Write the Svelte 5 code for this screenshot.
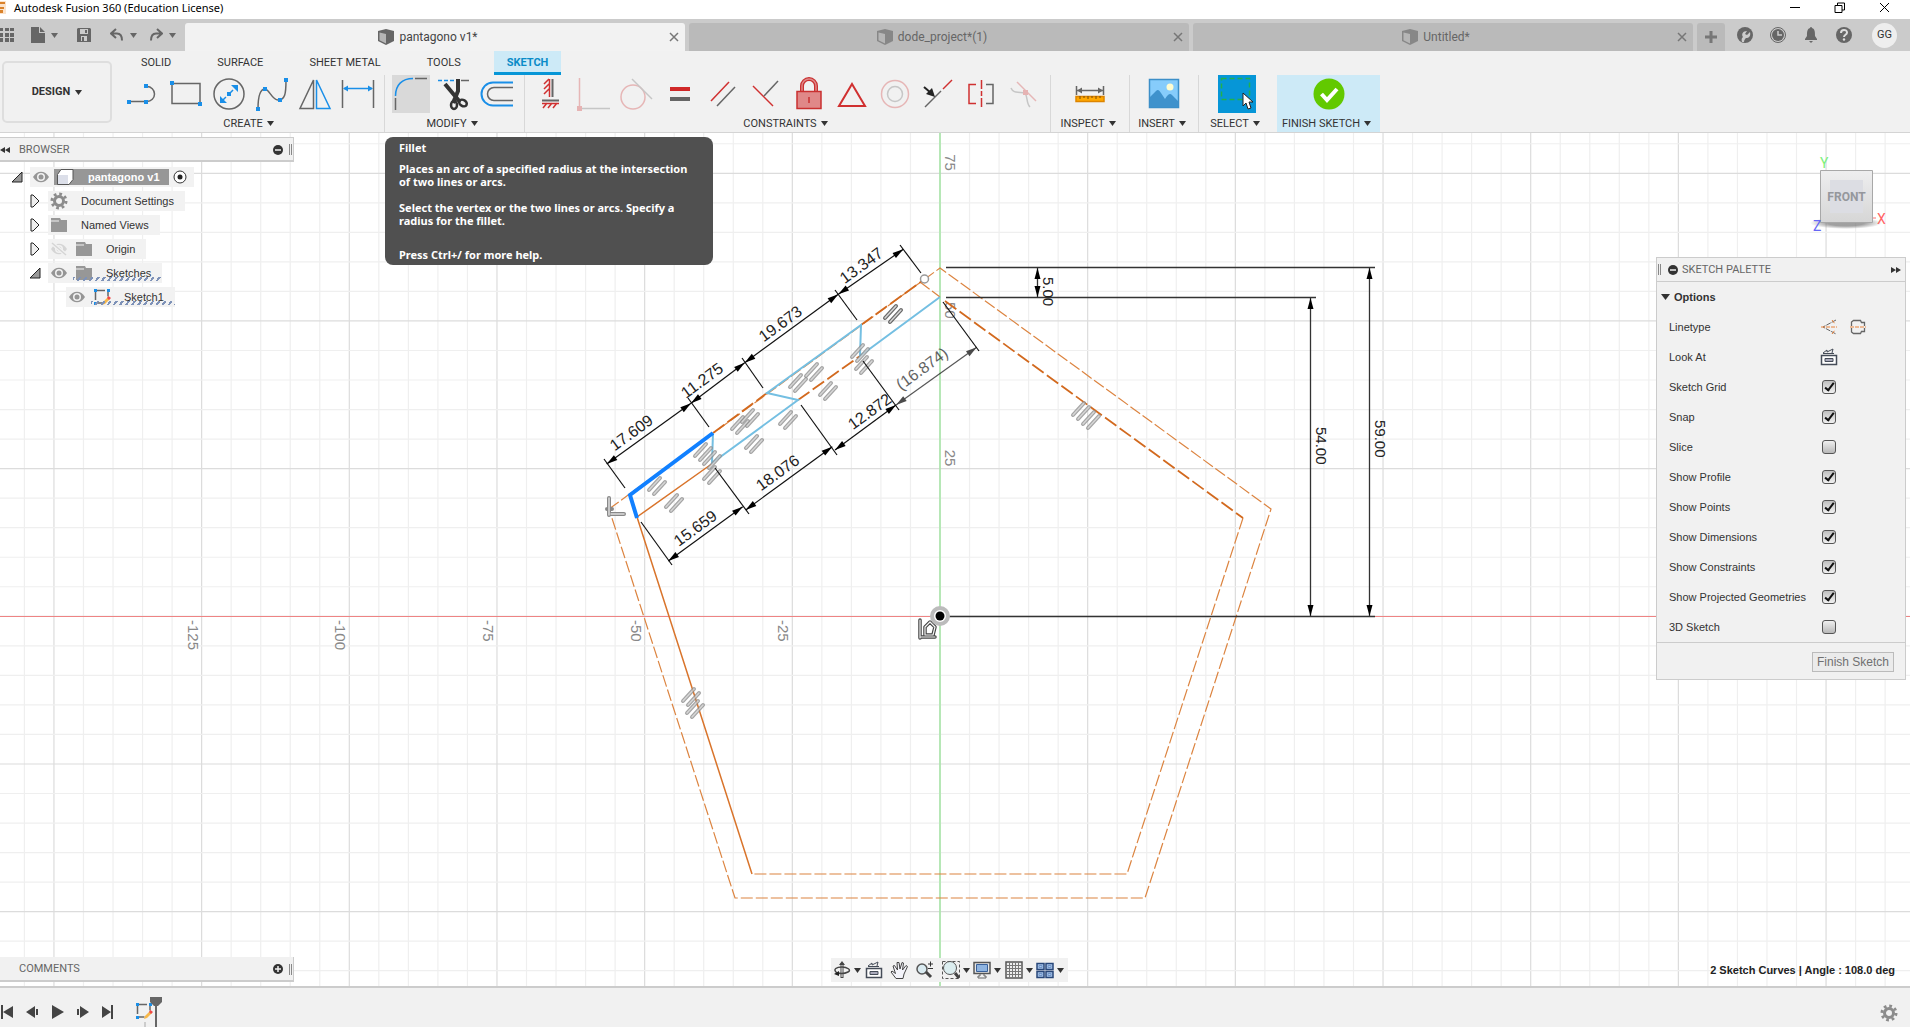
<script>
  const docs = [
    { name: 'pantagono v1*', active: true },
    { name: 'dode_project*(1)', active: false },
    { name: 'Untitled*', active: false }
  ];
  const modes = ['SOLID', 'SURFACE', 'SHEET METAL', 'TOOLS', 'SKETCH'];
  const groups = [
    { label: 'CREATE', icons: ['line', 'rect', 'circle', 'spline', 'mirror', 'dimension'] },
    { label: 'MODIFY', icons: ['fillet', 'trim', 'offset'] },
    {
      label: 'CONSTRAINTS',
      icons: ['horvert', 'coincident', 'tangent', 'equal', 'parallel', 'perpendicular', 'fix', 'polygon', 'concentric', 'midpoint', 'symmetry', 'curvature']
    },
    { label: 'INSPECT', icons: ['measure'] },
    { label: 'INSERT', icons: ['image'] },
    { label: 'SELECT', icons: ['select'] },
    { label: 'FINISH SKETCH', icons: ['finish'] }
  ];
  const tree = [
    { name: 'Document Settings', open: false, icons: ['gear'] },
    { name: 'Named Views', open: false, icons: ['folder'] },
    { name: 'Origin', open: false, icons: ['eyeoff', 'folder'] },
    { name: 'Sketches', open: true, icons: ['eye', 'folder'], hatch: true },
    { name: 'Sketch1', leaf: true, icons: ['eye', 'sketch'], hatch: true }
  ];
  const options = [
    { name: 'Sketch Grid', on: true },
    { name: 'Snap', on: true },
    { name: 'Slice', on: false },
    { name: 'Show Profile', on: true },
    { name: 'Show Points', on: true },
    { name: 'Show Dimensions', on: true },
    { name: 'Show Constraints', on: true },
    { name: 'Show Projected Geometries', on: true },
    { name: '3D Sketch', on: false }
  ];
  const navTools = [
    { icon: 'orbit', menu: true },
    { icon: 'lookat' },
    { icon: 'hand' },
    { icon: 'zoom' },
    { icon: 'zoomwin', menu: true },
    { icon: 'display', menu: true },
    { icon: 'gridset', menu: true },
    { icon: 'views', menu: true }
  ];
  const playback = [
    { name: 'Go to start', d: 'M1 1h2v14H1zM13 2v12L3 8z' },
    { name: 'Step back', d: 'M10 2v12L1 8zM11 5h2v6h-2z' },
    { name: 'Play', d: 'M2 1v14L14 8z' },
    { name: 'Step forward', d: 'M5 2v12l9-6zM2 5h2v6H2z' },
    { name: 'Go to end', d: 'M13 1h-2v14h2zM2 2v12L11 8z' }
  ];

  // Sketch space: origin of the axes and pixels for 5 units
  const ox = 940, oy = 616.3, step = 29.535;
  const cols = Array.from({ length: 66 }, (_, i) => i - 32);
  const rows = Array.from({ length: 30 }, (_, i) => i - 17);
  const xLabels = [-125, -100, -75, -50, -25];
  const yLabels = [75, 50, 25];

  const dims = [
    { t: '17.609', a: [606.7, 464], b: [691, 403.3], c: [631, 432.3] },
    { t: '11.275', a: [691, 403.3], b: [744.7, 362.7], c: [701.7, 380] },
    { t: '19.673', a: [744.7, 362.7], b: [838.3, 294.3], c: [780, 323.3] },
    { t: '13.347', a: [838.3, 294.3], b: [903.3, 249.3], c: [861, 265] },
    { t: '15.659', a: [668.3, 561], b: [742.7, 506.7], c: [695, 527.7] },
    { t: '18.076', a: [745.7, 510], b: [832.3, 446.7], c: [777.3, 472.3] },
    { t: '12.872', a: [835, 450], b: [896, 405], c: [869.3, 411] },
    { t: '(16.874)', a: [896, 405], b: [976.7, 347.3], c: [921.7, 368.3], soft: true }
  ];
  const ext = [
    [604, 459, 625, 488], [688, 398, 709, 427], [742, 358, 763, 388], [835, 290, 857, 320], [900, 245, 921, 273],
    [641, 522, 672, 565], [715, 468, 749, 514], [801, 405, 837, 455], [863, 361, 899, 410], [943, 302, 979, 351]
  ];
  const marks = [
    [657, 486], [674, 503], [703, 452], [712, 460], [712, 475], [740, 425], [750, 418], [754, 444], [788, 420],
    [798, 383], [814, 372], [828, 391], [860, 353], [864, 365], [893, 314], [1081, 411], [1091, 420], [691, 697], [695, 709]
  ];
</script>

{#snippet caret()}
  <svg class="caret" width="7" height="5" viewBox="0 0 7 5"><path d="M0 0h7L3.500 5z" fill="currentColor" /></svg>
{/snippet}

{#snippet cube(dim)}
  <svg class="cube" class:dim width="16" height="16" viewBox="0 0 16 16">
    <path d="M8 0l8 2v10l-8 4-8-4V2z" fill="#666" />
    <path d="M1.500 3.500L8 5v9.500l-6.500-3.300z" fill="#b5b5b5" />
  </svg>
{/snippet}

{#snippet tool(name)}
  <svg width="38" height="38" viewBox="0 0 38 38" fill="none" stroke="#666" stroke-width="1.500">
    {#if name === 'line'}
      <path d="M5 26.500h18a7.500 7.500 0 0 0 0-15" />
      <path d="M3 25h4v4H3zM20 25h4v4h-4zM20 9h4v4h-4z" class="bf" />
    {:else if name === 'rect'}
      <path d="M5 8.500h28v20H5z" /><path d="M3 6h4v4H3zM31 27h4v4h-4z" class="bf" />
    {:else if name === 'circle'}
      <circle cx="19" cy="19" r="15" /><path d="M11 27L27 11" class="bs" stroke-dasharray="7 3" />
      <path d="M28 10v7l-7-7zM10 28v-7l7 7zM17 17h4v4h-4z" class="bf" />
    {:else if name === 'spline'}
      <path d="M5 34c0-16 3-20 7-20s7 11 13 11c7 0 8-6 8-20" />
      <path d="M3 32h4v4H3zM10 12h4v4h-4zM25 23h4v4h-4zM31 3h4v4h-4z" class="bf" />
    {:else if name === 'mirror'}
      <path d="M17.500 5v28.500H4z" /><path d="M20.500 5v28.500H34z" class="bs" />
    {:else if name === 'dimension'}
      <path d="M3.500 5v28M34.500 5v28" /><path d="M5 13.500h28" class="bs" /><path d="M4 13.500l5-3v6zM34 13.500l-5-3v6z" class="bf" />
    {:else if name === 'fillet'}
      <path d="M3.500 35V23M23 3.500h12" /><path d="M3.500 21C3.500 10 10 3.500 21 3.500" class="bs" />
    {:else if name === 'trim'}
      <path d="M3 5.500h17" class="bs" stroke-dasharray="4 2" /><path d="M26 5.500h8" />
      <path d="M10 9l15 18M23 4v12l-5 12" stroke="#333" stroke-width="4" />
      <ellipse cx="19" cy="30" rx="3" ry="4" stroke="#333" stroke-width="2.500" /><ellipse cx="28" cy="28" rx="4" ry="3" stroke="#333" stroke-width="2.500" transform="rotate(30 28 28)" />
    {:else if name === 'offset'}
      <path d="M35 7.500H15a11.500 11.500 0 0 0 0 23h20" class="bs" stroke-width="2" /><path d="M35 12.500H16a6.500 6.500 0 0 0 0 13h19" />
    {:else if name === 'horvert'}
      <path d="M20.500 4v18M10 25.500h17" stroke-width="2" />
      <path d="M17.500 4v18M10 28.500h17M17 4l-5 5M17 9l-5 5M17 14l-5 5M15 28l-4 5M20 28l-4 5M25 28l-4 5" class="rs" />
    {:else if name === 'coincident'}
      <g class="faint"><path d="M4.500 3v30" class="rs" /><path d="M4 33.500h31" /><path d="M2 31h5v5H2z" class="rf" /></g>
    {:else if name === 'tangent'}
      <g class="faint"><circle cx="15" cy="22" r="12" class="rs" /><path d="M14 4l20 20" /></g>
    {:else if name === 'equal'}
      <path d="M9 12h20v4H9z" class="rf" /><path d="M9 22h20v4H9z" fill="#666" stroke="none" />
    {:else if name === 'parallel'}
      <path d="M7 26L25 7" class="rs" /><path d="M13 31L31 12" />
    {:else if name === 'perpendicular'}
      <path d="M6 11l20 20" class="rs" /><path d="M17 21L31 6" />
    {:else if name === 'fix'}
      <path d="M12 16V11a7 7 0 0 1 14 0v5" stroke="#c93030" stroke-width="4" /><path d="M12 16V11a7 7 0 0 1 14 0v5" stroke="#e08888" stroke-width="1.500" />
      <path d="M7 16.500h24v17H7z" fill="#e08888" stroke="#c93030" /><path d="M19 22v6" stroke="#c93030" />
    {:else if name === 'polygon'}
      <path d="M19 9L32 31H6z" class="rs" stroke-width="2" />
    {:else if name === 'concentric'}
      <g class="faint"><circle cx="19" cy="19" r="13.500" class="rs" /><circle cx="19" cy="19" r="7.500" /></g>
    {:else if name === 'midpoint'}
      <path d="M6 32L22 16" /><path d="M24 14L33 5" class="rs" /><path d="M5 12l7 6" stroke="#222" stroke-width="2" /><path d="M16 22l-3-9-6 6z" fill="#222" stroke="none" />
    {:else if name === 'symmetry'}
      <path d="M14 9.500H7v19h7M19.500 5v9M19.500 16v5M19.500 23v9" class="rs" /><path d="M24 9.500h7v19h-7" />
    {:else if name === 'curvature'}
      <g class="faint"><path d="M12 7l19 19" class="rs" /><path d="M6 13c2 5 6 4 14 5 3 4 1 10 5 14" /><path d="M18 15h5v5h-5z" class="rf" /></g>
    {:else if name === 'measure'}
      <path d="M5.500 11v9M32.500 11v9M6 15.500h26" /><path d="M6 15.500l5-3v6zM32 15.500l-5-3v6z" fill="#666" stroke="none" />
      <path d="M5 21.500h28v5H5z" fill="#ffa800" stroke="#dd8500" /><path d="M9 21v3M13 21v2M17 21v3M21 21v2M25 21v3M29 21v2" stroke="#7a4a00" stroke-width="1" />
    {:else if name === 'image'}
      <path d="M4.500 4.500h29v28h-29z" fill="#86ccfb" stroke="#3c8fc8" /><path d="M5 22l6-6c2-2 3-1 5 2l4 6c3-5 5-6 7-4l6 6v6H5z" fill="#3f92cc" stroke="none" />
      <circle cx="25" cy="12" r="3.500" fill="#fffcd0" stroke="none" />
    {:else if name === 'select'}
      <path d="M3.500 3.500h28v21h-28z" stroke="#22b14c" stroke-dasharray="5 3" /><path d="M25 18v13l3-3 2 6 3-1-2-6h4z" fill="#fff" stroke="#222" stroke-width="1" />
    {:else if name === 'finish'}
      <circle cx="19" cy="19" r="15.500" fill="#62c900" stroke="none" /><path d="M11.500 19l5.500 6 10-11" stroke="#fff" stroke-width="4" />
    {/if}
  </svg>
{/snippet}

{#snippet glyph(name)}
  <svg width="18" height="18" viewBox="0 0 18 18" fill="none">
    {#if name === 'eye' || name === 'eyeoff'}
      <g opacity={name === 'eyeoff' ? 0.3 : 1}>
        <path d="M1 9c4-7 12-7 16 0-4 7-12 7-16 0z" fill="#959595" /><circle cx="9" cy="9" r="4" fill="#f2f2f2" /><circle cx="9" cy="9" r="2.500" fill="#959595" />
        {#if name === 'eyeoff'}<path d="M2 3l14 12" stroke="#f2f2f2" stroke-width="4" /><path d="M2 3l14 12" stroke="#959595" stroke-width="1.500" />{/if}
      </g>
    {:else if name === 'folder'}
      <path d="M1 4h16v12H1z" fill="#979797" /><path d="M1 2h9l1 2H1z" fill="#979797" /><path d="M1 5h8" stroke="#f2f2f2" />
    {:else if name === 'gear'}
      <circle cx="9" cy="9" r="4.500" stroke="#8c8c8c" stroke-width="3" /><circle cx="9" cy="9" r="7" stroke="#8c8c8c" stroke-width="3" stroke-dasharray="2.700 2.800" />
    {:else if name === 'sketch'}
      <path d="M3 2.500h12v6M2.500 3v12h7" stroke="#666" stroke-width="1.500" stroke-dasharray="9 2" /><path d="M1 1h3v3H1zM14 1h3v3h-3zM1 14h3v3H1z" fill="#1a8fe8" />
      <path d="M9 17l1-3 5-5 2 2-5 5z" fill="#f7b84a" /><path d="M14 10l1.500-2L18 10l-2 2z" fill="#f04848" />
    {:else if name === 'cubebox'}
      <path d="M1.500 6.500L5 1.500h12v10l-4 5H1.500z" fill="#fff" stroke="#555" /><path d="M2 7h10v9H2z" fill="#dcdfe9" />
    {:else if name === 'orbit'}
      <path d="M9 2v15" stroke="#444" stroke-width="3" /><path d="M9 3v13" stroke="#fff" /><path d="M9 0l3 4H6z" fill="#444" /><path d="M4 12c-5-4 0-6 5-6s10 3 6 5c-2 1-6 2-10 1" stroke="#444" stroke-width="1.500" /><path d="M1 13l5-3v5z" fill="#222" />
    {:else if name === 'lookat'}
      <path d="M1.500 7.500h15v9h-15z" fill="#fff" stroke="#454c58" stroke-width="1.500" /><path d="M5 10.500h8v3H5z" fill="#aab" stroke="#454c58" /><path d="M3 5l4-3v2l6-3-1 4M3 5.500h11" stroke="#454c58" />
    {:else if name === 'hand'}
      <path d="M6 17.500L1 11l1-1 3.500 2.500L3 5l1.500-.5L7.500 9 7 1.500h2L10 8l2-6.500 1.500.5L12.500 9 16 4.500l1.500 1L14 13l-1 4.500z" fill="#f4f4fa" stroke="#444" />
    {:else if name === 'zoom'}
      <circle cx="6" cy="8" r="5" fill="#d9eaf0" stroke="#555" stroke-width="1.500" /><path d="M10 11l5 5" stroke="#444" stroke-width="3" /><path d="M12 3h5M14.500 0.500v5M12 7.500h5" stroke="#333" />
    {:else if name === 'zoomwin'}
      <path d="M0.500 0.500h17v17H0.500z" stroke="#555" stroke-dasharray="3 2" /><circle cx="8" cy="7" r="6.500" fill="#dceef0" stroke="#555" /><path d="M13 12l4 5" stroke="#444" stroke-width="3" />
    {:else if name === 'display'}
      <path d="M1 1.500h16v11H1z" fill="#e8e8e8" stroke="#555" stroke-width="1.500" /><path d="M3.500 3.500h11v7h-11z" fill="#8fb4e0" stroke="#38609a" /><path d="M7 13v2H5v2h8v-2h-2v-2" stroke="#666" />
    {:else if name === 'gridset'}
      <path d="M1 1h16v16H1z" fill="#eee" stroke="#555" stroke-width="1.500" /><path d="M4.500 1v16M7.500 1v16M10.500 1v16M13.500 1v16M1 4.500h16M1 7.500h16M1 10.500h16M1 13.500h16" stroke="#777" />
    {:else if name === 'views'}
      <path d="M1 2.500h7v6H1zM10 2.500h7v6h-7zM1 10.500h7v6H1zM10 10.500h7v6h-7z" fill="#a9c5ea" stroke="#28477a" stroke-width="1.500" /><path d="M3 4.500h3v2H3zM12 4.500h3v2h-3zM3 12.500h3v2H3zM12 12.500h3v2h-3z" stroke="#6f94c8" />
    {/if}
  </svg>
{/snippet}

{#snippet badge(plus)}
  <svg width="10" height="10" viewBox="0 0 10 10"><circle cx="5" cy="5" r="5" fill="#333" /><path d={plus ? 'M2 5h6M5 2v6' : 'M2 5h6'} stroke="#f1f1f1" stroke-width="1.500" /></svg>
{/snippet}

<div class="app">
  <header class="title">
    <svg class="logo" width="8" height="14" viewBox="0 0 8 14"><path d="M0 0h6v13H0z" fill="#fbe3cc" /><path d="M0 1h5v2H0zM0 6h4v2H0zM0 9h3v3H0z" fill="#d9822b" /></svg>
    <span class="caption">Autodesk Fusion 360 (Education License)</span>
    <button aria-label="Minimize"><svg width="11" height="11"><path d="M1 5.500h10" /></svg></button>
    <button aria-label="Restore"><svg width="11" height="11"><path d="M1 3.500h7v7H1zM3.500 3V1h7v7H8" /></svg></button>
    <button aria-label="Close"><svg width="11" height="11"><path d="M1 1l9 9M10 1l-9 9" /></svg></button>
  </header>

  <div class="tabbar">
    <div class="quick">
      <button class="q-grid" aria-label="Show data panel"><svg width="14" height="14" viewBox="0 0 14 14"><path d="M0 0h3v3H0zM5 0h4v3H5zM10 0h4v3h-4zM0 5h3v4H0zM5 5h4v4H5zM10 5h4v4h-4zM0 10h3v4H0zM5 10h4v4H5zM10 10h4v4h-4z" fill="#666" /></svg></button>
      <button class="q-file" aria-label="File"><svg width="14" height="16" viewBox="0 0 14 16"><path d="M0 0h8v6h6v10H0zM9 0l5 5H9z" fill="#666" /></svg>{@render caret()}</button>
      <button class="q-save" aria-label="Save"><svg width="14" height="14" viewBox="0 0 14 14"><path d="M0 1l1-1h12l1 1v13H0z" fill="#666" /><path d="M3 1h8v5H3zM4 8h6v5H4z" fill="#ccc" /><path d="M8 2h2v3H8zM5 9h2v4H5z" fill="#666" /></svg></button>
      <button class="q-undo" aria-label="Undo"><svg width="14" height="14" viewBox="0 0 14 14"><path d="M6 1L1 5.500 6 10M1 5.500h6c4 0 5 3 5 7" fill="none" stroke="#666" stroke-width="2" /></svg>{@render caret()}</button>
      <button class="q-redo" aria-label="Redo"><svg width="14" height="14" viewBox="0 0 14 14"><path d="M8 1l5 4.500L8 10M13 5.500H7c-4 0-5 3-5 7" fill="none" stroke="#666" stroke-width="2" /></svg>{@render caret()}</button>
    </div>
    {#each docs as doc}
      <div class="doc" class:active={doc.active}>
        <button class="doc-name">{@render cube(!doc.active)}{doc.name}</button>
        <button class="doc-close" aria-label="Close {doc.name}"><svg width="10" height="10"><path d="M1 1l8 8M9 1L1 9" stroke="#777" stroke-width="1.500" /></svg></button>
      </div>
    {/each}
    <button class="newtab" aria-label="New tab"><svg width="14" height="14"><path d="M7 1v12M1 7h12" stroke="#777" stroke-width="3" /></svg></button>
    <div class="account">
      <button aria-label="Extensions"><svg width="16" height="16" viewBox="0 0 16 16"><circle cx="8" cy="8" r="8" fill="#666" /><path d="M5 15c-1-3 0-4 1-5-2-3 0-6 4-6L8 7l2 1 3-3c1 4-1 6-4 6-1 1-2 2-2 4z" fill="#ccc" /></svg></button>
      <button aria-label="Job status"><svg width="16" height="16" viewBox="0 0 16 16"><circle cx="8" cy="8" r="7.500" fill="#ccc" stroke="#666" /><circle cx="8" cy="8" r="6" fill="#666" /><path d="M8 4v4h4" fill="none" stroke="#ccc" stroke-width="1.500" /></svg></button>
      <button aria-label="Notifications"><svg width="16" height="16" viewBox="0 0 16 16"><path d="M8 0c1 0 1 1 1 1 3 1 3 4 3 8l2 3v1H2v-1l2-3c0-4 0-7 3-8 0 0 0-1 1-1zM6 14h4l-2 2z" fill="#666" /></svg></button>
      <button aria-label="Help"><svg width="16" height="16" viewBox="0 0 16 16"><circle cx="8" cy="8" r="8" fill="#666" /><path d="M5 6c0-4 6-4 6-0.500C11 8 8 7.500 8 10" fill="none" stroke="#ddd" stroke-width="2" /><circle cx="8" cy="12.500" r="1.200" fill="#ddd" /></svg></button>
      <button class="avatar">GG</button>
    </div>
  </div>

  <div class="ribbon">
    <div class="workspace"><button>DESIGN {@render caret()}</button></div>
    <div class="ribbon-main">
      <nav class="modes">
        {#each modes as m}<button class:current={m === 'SKETCH'}>{m}</button>{/each}
      </nav>
      <div class="groups">
        {#each groups as g}
          <section class="group {g.label.toLowerCase().replace(' ', '-')}">
            <div class="icons">
              {#each g.icons as i}<button class={i} aria-label={i}>{@render tool(i)}</button>{/each}
            </div>
            <button class="glabel">{g.label} {@render caret()}</button>
          </section>
        {/each}
      </div>
    </div>
  </div>

  <main class="canvas">
    <svg class="drawing" viewBox="0 133 1910 853" preserveAspectRatio="xMidYMid slice" fill="none">
      {#each cols as c}<path d="M{ox + c * step} 133V986" stroke={c % 5 === 0 ? '#dcdcdc' : '#efefef'} stroke-width="1.200" />{/each}
      {#each rows as r}<path d="M0 {oy + r * step}H1910" stroke={r % 5 === 0 ? '#dcdcdc' : '#efefef'} stroke-width="1.200" />{/each}
      <path d="M0 616.500H1910" stroke="#ee8484" />
      <path d="M940 133V986" stroke="#a4e6a4" stroke-width="1.500" />
      {#each xLabels as v}<text class="axis" transform="translate({ox + (v / 5) * step - 14} 620) rotate(90)">{v}</text>{/each}
      {#each yLabels as v}<text class="axis" transform="translate(945 {oy - (v / 5) * step - 19}) rotate(90)">{v}</text>{/each}

      <g stroke="#dc8440" stroke-width="1.200" stroke-dasharray="12 3">
        <path d="M609 509L940 268L1271 509L1145 898H735L609 509" />
        <path d="M920 282L940 297M1243 518L1127 874H752" />
      </g>
      <path d="M713 433L767 393M861 325L922 281M798 400L860 356M945 301L1243 518" stroke="#d2691e" stroke-width="1.800" stroke-dasharray="14 4" />
      <path d="M713 463L637 517L752 874" stroke="#d9742b" stroke-width="1.500" />
      <path d="M713 433L712 463L798 400L767 393L861 325L860 356L940 297" stroke="#74bfe2" stroke-width="2" />
      {#each marks as m, i}
        <g transform="translate({m[0]} {m[1]})" stroke-linecap="round" class="mark" class:strong={i === 14}>
          <path d="M-8 4L3 -8M-3 8L8 -4" stroke-width="4" /><path class="core" d="M-8 4L3 -8M-3 8L8 -4" stroke-width="1.500" />
        </g>
      {/each}
      <path d="M713 433L630 495L637 518" stroke="#1180ff" stroke-width="4" />

      {#each ext as e}<path d="M{e[0]} {e[1]}L{e[2]} {e[3]}" stroke="#111" stroke-width="1.200" />{/each}
      {#each dims as d}
        {@const deg = (Math.atan2(d.b[1] - d.a[1], d.b[0] - d.a[0]) * 180) / Math.PI}
        <g class:soft={d.soft}>
          <path d="M{d.a[0]} {d.a[1]}L{d.b[0]} {d.b[1]}" stroke="#111" stroke-width="1.200" />
          <path d="M0 0l11-3v6z" fill="#000" transform="translate({d.a[0]} {d.a[1]}) rotate({deg})" />
          <path d="M0 0l-11-3v6z" fill="#000" transform="translate({d.b[0]} {d.b[1]}) rotate({deg})" />
          <text class="dim" text-anchor="middle" transform="translate({d.c[0]} {d.c[1]}) rotate(-36)" y="6">{d.t}</text>
        </g>
      {/each}
      <path d="M946 267.500H1375M946 297.500H1316M940 616.500H1375M1037.500 268V297M1310.500 298V616M1369.500 268V616" stroke="#333" stroke-width="1.300" />
      <path d="M1037.500 268l-3 11h6zM1037.500 297l-3-11h6zM1310.500 298l-3 11h6zM1310.500 616l-3-11h6zM1369.500 268l-3 11h6zM1369.500 616l-3-11h6z" fill="#000" />
      <text class="lin" transform="translate(1043 277) rotate(90)">5.00</text>
      <text class="lin" transform="translate(1316 427) rotate(90)">54.00</text>
      <text class="lin" transform="translate(1375 420) rotate(90)">59.00</text>

      <circle cx="924.500" cy="279" r="4" stroke="#999" stroke-width="1.500" fill="#fff" />
      <path d="M609 498v17M611 514h13M607 509h5" stroke="#888" stroke-width="4" stroke-linecap="round" />
      <path d="M609 498v17M611 514h13" stroke="#ddd" stroke-width="1.500" stroke-linecap="round" />
      <g stroke-linecap="round" stroke-linejoin="round">
        <path d="M920 620v18M921 637h14M925 627l5-5 5 5-2 8h-8z" stroke="#444" stroke-width="3.500" />
        <path d="M920 620v18M921 637h14M925 627l5-5 5 5-2 8h-8z" stroke="#f4f4f4" stroke-width="1.200" />
      </g>
      <circle cx="940" cy="616" r="8" fill="#fff" stroke="#bbb" stroke-width="4" /><circle cx="940" cy="616" r="4.500" fill="#000" />
    </svg>

    <aside class="browser">
      <div class="bar"><svg class="rew" width="10" height="6"><path d="M5 0v6L0 3zM10 0v6L5 3z" fill="#333" /></svg><span>BROWSER</span>{@render badge(false)}<i class="grip"></i></div>
      <ul class="tree">
        <li class="root">
          <svg class="tri" width="12" height="12"><path d="M11 1v10H1z" fill="#999" stroke="#222" /></svg>
          <div class="node">
            {@render glyph('eye')}
            <span class="sel">{@render glyph('cubebox')}<b>pantagono v1</b></span>
            <svg width="14" height="14"><circle cx="7" cy="7" r="6" fill="#fff" stroke="#333" /><circle cx="7" cy="7" r="2.500" fill="#222" /></svg>
          </div>
        </li>
        {#each tree as t}
          <li class:leaf={t.leaf}>
            {#if t.open}<svg class="tri" width="12" height="12"><path d="M11 1v10H1z" fill="#999" stroke="#222" /></svg>
            {:else if !t.leaf}<svg class="tri" width="12" height="14"><path d="M2 1l2 0 6 6-6 6h-2z" fill="#eee" stroke="#222" /></svg>{/if}
            <div class="node">
              {#each t.icons as i}{@render glyph(i)}{/each}
              <span class="nm">{t.name}</span>
              {#if t.hatch}<i class="hatch"></i>{/if}
            </div>
          </li>
        {/each}
      </ul>
    </aside>

    <div class="tooltip" role="tooltip">
      <p class="head">Fillet</p>
      <p>Places an arc of a specified radius at the intersection<br />of two lines or arcs.</p>
      <p>Select the vertex or the two lines or arcs. Specify a<br />radius for the fillet.</p>
      <p class="more">Press Ctrl+/ for more help.</p>
    </div>

    <svg class="viewcube" width="80" height="80" viewBox="0 0 80 80">
      <defs>
        <linearGradient id="face" x1="0" y1="0" x2="0" y2="1"><stop offset="0" stop-color="#eeeeef" /><stop offset="1" stop-color="#d6d6d6" /></linearGradient>
        <radialGradient id="shade"><stop offset="0.500" stop-color="#777" /><stop offset="1" stop-color="#777" stop-opacity="0" /></radialGradient>
      </defs>
      <ellipse cx="38" cy="69" rx="36" ry="6" fill="url(#shade)" opacity="0.700" />
      <path d="M12.500 16.500h52v52h-52z" fill="url(#face)" stroke="#a8a8a8" />
      <path d="M22 26h33v33H22z" fill="#dcdde3" />
      <text x="38.500" y="47" class="front" text-anchor="middle">FRONT</text>
      <text x="12" y="14" class="ax" fill="#7cf07c">Y</text><text x="69" y="70" class="ax" fill="#ff6464">X</text><text x="5" y="77" class="ax" fill="#6666f5">Z</text>
      <path d="M65 64h3" stroke="#ff7070" />
    </svg>

    <aside class="palette">
      <div class="bar"><i class="grip"></i>{@render badge(false)}<span>SKETCH PALETTE</span><svg width="10" height="6"><path d="M0 0v6l5-3zM5 0v6l5-3z" fill="#333" /></svg></div>
      <h2><svg width="9" height="6"><path d="M0 0h9L4.500 6z" fill="#333" /></svg>Options</h2>
      <div class="opt"><span>Linetype</span>
        <button aria-label="Construction"><svg width="16" height="16" fill="none"><path d="M15 1L2 8l13 7" stroke="#666" stroke-dasharray="5 1" /><path d="M0 8h16M11 1l3 4M11 15l3-4" stroke="#e8823a" stroke-dasharray="4 1" /></svg></button>
        <button class="second" aria-label="Centerline"><svg width="16" height="16" fill="none"><path d="M1.500 7V3l2-1.500h7l1 2h3V7M1.500 9v4l2 1.500h7l1-2h3V9" stroke="#666" stroke-width="1.300" /><path d="M0 8h16" stroke="#e8823a" stroke-dasharray="4 1" /></svg></button>
      </div>
      <div class="opt"><span>Look At</span><button aria-label="Look At">{@render glyph('lookat')}</button></div>
      {#each options as o}
        <label class="opt"><span>{o.name}</span><input type="checkbox" checked={o.on} /></label>
      {/each}
      <footer><button>Finish Sketch</button></footer>
    </aside>

    <div class="comments bar"><span>COMMENTS</span>{@render badge(true)}<i class="grip"></i></div>

    <div class="navbar">
      {#each navTools as n}<button class:menu={n.menu} aria-label={n.icon}>{@render glyph(n.icon)}{#if n.menu}{@render caret()}{/if}</button>{/each}
    </div>
    <p class="status">2 Sketch Curves | Angle : 108.0 deg</p>
  </main>

  <footer class="timeline">
    <div class="play">
      {#each playback as p}<button aria-label={p.name}><svg width="15" height="16"><path d={p.d} fill="#444" /></svg></button>{/each}
    </div>
    <div class="feature">
      {@render glyph('sketch')}
      <svg class="marker" width="12" height="30"><path d="M0 0h12v5L8 9H4L0 5z" fill="#666" /><path d="M6 8v22" stroke="#666" stroke-width="2" /></svg>
      <i class="tick"></i>
    </div>
    <button class="settings" aria-label="Timeline settings">{@render glyph('gear')}</button>
  </footer>
</div>

<style>
  :global(body) { margin: 0; font-family: 'Liberation Sans', Arial, sans-serif; }
  .app { display: flex; flex-direction: column; height: 100vh; min-height: 760px; overflow: hidden; font-size: 11px; color: #333; background: #fff; }
  button { padding: 0; border: 0; background: none; font: inherit; color: inherit; display: flex; align-items: center; justify-content: center; }
  svg { display: block; flex: none; }
  p, h2, ul { margin: 0; padding: 0; }

  .title { display: flex; align-items: center; height: 19px; flex: none; padding-bottom: 4px; box-sizing: border-box; background: #fff; }
  .caption { flex: 1; margin-left: 6px; font: 11px/15px 'Noto Sans', sans-serif; color: #000; }
  .title button { width: 45px; height: 13px; }
  .title button:last-child { margin-right: 3px; }
  .title button path { fill: none; stroke: #000; }

  .tabbar { display: flex; align-items: stretch; gap: 4px; height: 32px; flex: none; box-sizing: border-box; padding-top: 4px; background: #cbcbcb; }
  .quick { display: flex; width: 181px; align-items: center; padding-bottom: 4px; box-sizing: border-box; color: #666; }
  .quick button { gap: 6px; }
  .q-file { margin-left: 17px; }
  .q-save { margin-left: 19px; }
  .q-undo { margin-left: 19px; }
  .q-redo { margin-left: 12px; }
  .doc { flex: 1; display: flex; background: #bababa; border-radius: 3px 3px 0 0; color: #666; }
  .doc.active { background: #f2f2f2; color: #444; }
  .doc-name { flex: 1; gap: 5px; padding-left: 8px; font: 12px/16px Roboto, sans-serif; }
  .doc-close { width: 22px; }
  .dim { opacity: 0.6; }
  .newtab { width: 28px; background: #bababa; border-radius: 3px 3px 0 0; }
  .account { display: flex; align-items: center; gap: 17px; width: 181px; padding-left: 8px; padding-bottom: 4px; box-sizing: border-box; }
  .avatar { width: 25px; height: 25px; margin-left: 3px; border-radius: 50%; background: #eee; font: 11px/12px Roboto, sans-serif; flex: none; }

  .ribbon { display: flex; flex: none; height: 82px; box-sizing: border-box; background: #f1f1f1; border-bottom: 1px solid #d4d4d4; font: 11px/14px Roboto, sans-serif; }
  .workspace { width: 121px; padding: 10px 9px 9px 2px; box-sizing: border-box; }
  .workspace button { width: 100%; height: 100%; border: 2px solid #dedede; border-radius: 5px; font-weight: 700; gap: 5px; }
  .ribbon-main { display: flex; flex-direction: column; flex: 1; }
  .modes { display: flex; gap: 20px; height: 24px; padding-left: 7px; }
  .modes button { padding: 2px 13px 0; border-bottom: 3px solid transparent; }
  .modes .current { background: #cdeaf7; border-color: #0696d7; color: #0a8cc8; font-weight: 700; }
  .groups { display: flex; height: 57px; }
  .group { display: flex; flex-direction: column; align-items: center; padding: 0 4px; border-right: 1px solid #d8d8d8; }
  .group.create { padding-left: 0; }
  .group.modify { padding-right: 5px; }
  .icons { display: flex; gap: 5px; padding: 0 3px; height: 38px; }
  .icons .fillet { background: #d9d9d9; }
  .icons .select { background: #0696d7; }
  .glabel { height: 19px; gap: 4px; padding: 2px 4px 0 0; box-sizing: border-box; }
  .inspect { width: 70px; }
  .insert { width: 60px; }
  .select.group { width: 68px; border: 0; }
  .finish-sketch { width: 95px; margin-left: 2px; background: #cdeaf7; border: 0; }
  .icons :global(.bf) { fill: #1a8fe8; stroke: none; }
  .icons :global(.bs) { stroke: #1a8fe8; }
  .icons :global(.rs) { stroke: #d03030; }
  .icons :global(.rf) { fill: #d02828; stroke: none; }
  .icons :global(.faint) { opacity: 0.3; }

  .canvas { position: relative; flex: 1; min-height: 0; overflow: hidden; }
  .drawing { position: absolute; inset: 0; width: 100%; height: 100%; }
  .axis { font-size: 15px; fill: #888; }
  text.dim { font-size: 16px; fill: #222; opacity: 1; }
  .soft { opacity: 0.7; }
  .lin { font-size: 15px; fill: #222; }
  .mark { stroke: #8f8f8f; opacity: 0.8; }
  .mark .core { stroke: #ccc; }
  .strong { stroke: #444; }

  .bar { display: flex; align-items: center; box-sizing: border-box; height: 25px; background: #f1f1f1; border: 1px solid #ccc; border-bottom-width: 2px; padding-top: 1px; color: #666; font: 11px/14px Roboto, sans-serif; }
  .bar span { flex: 1; }
  .grip { width: 1px; height: 11px; border: solid #888; border-width: 0 1px; }
  .browser { position: absolute; left: 0; top: 4px; }
  .browser .bar, .comments { width: 294px; border-left: 0; }
  .browser .bar span { margin-left: 9px; }
  .browser .grip, .comments .grip { margin: 0 1px 0 6px; }
  .comments { position: absolute; left: 0; bottom: 4px; border-top: 0; }
  .comments span { margin-left: 19px; }
  .tree { list-style: none; padding-top: 3px; }
  .tree li { display: flex; align-items: center; height: 24px; padding-left: 29px; }
  .tree .root { padding-left: 11px; }
  .tree .leaf { padding-left: 66px; }
  .tri { width: 12px; margin-right: 7px; }
  .node { position: relative; display: flex; align-items: center; gap: 7px; height: 20px; padding: 0 11px 0 2px; background: #f2f2f2; }
  .root .node { gap: 4px; padding-right: 7px; }
  .sel { display: flex; align-items: center; height: 16px; padding: 0 9px 0 2px; background: #979797; color: #fff; }
  .sel b { margin-left: 14px; font-size: 11px; line-height: 16px; }
  .nm { margin-left: 6px; }
  .hatch { position: absolute; left: 25px; right: 0; bottom: 2px; height: 4px; background: repeating-linear-gradient(125deg, #7e92b8 0 2px, transparent 2px 5px); }

  .tooltip { position: absolute; left: 385px; top: 4px; width: 328px; height: 128px; box-sizing: border-box; padding: 4px 0 0 14px; border-radius: 8px; background: #505050; color: #fff; font: 700 11px/13px 'Noto Sans', sans-serif; white-space: nowrap; }
  .tooltip p { margin-bottom: 13px; }
  .tooltip .head { margin-bottom: 8px; }
  .tooltip .more { margin-top: 21px; }

  .viewcube { position: absolute; right: 22px; top: 21px; }
  .front { font: 700 12px Roboto, sans-serif; fill: #95979c; }
  .ax { font: 14px Roboto, sans-serif; }

  .palette { position: absolute; right: 4px; top: 124px; width: 250px; box-sizing: border-box; border: 1px solid #ccc; background: #f1f1f1; }
  .palette .bar { height: 24px; border-width: 0 0 1px; padding: 0 4px 0 1px; gap: 7px; }
  .palette .bar span { margin-left: -3px; }
  h2 { display: flex; align-items: center; gap: 4px; height: 30px; padding-left: 4px; font-size: 11px; }
  .opt { display: flex; align-items: center; height: 30px; padding-left: 12px; }
  .opt span { width: 151px; }
  .opt button { width: 18px; height: 18px; }
  .opt .second { margin-left: 11px; }
  .opt input { appearance: none; width: 14px; height: 14px; margin: 0 0 0 2px; border: 1px solid #555; border-radius: 3px; background: linear-gradient(#f0f0f0, #b8b8b8); display: grid; place-items: center; }
  .opt input:checked { background: linear-gradient(#c0c0c0, #f0f0f0); }
  .opt input:checked::before { content: ''; width: 3px; height: 8px; margin-bottom: 2px; border: solid #111; border-width: 0 2px 2px 0; transform: rotate(38deg); }
  .palette footer { display: flex; justify-content: flex-end; padding: 9px 11px 7px; border-top: 1px solid #ccc; }
  .palette footer button { height: 20px; padding: 0 4px; border: 1px solid #bbb; background: #ebebeb; color: #707070; font-size: 12px; }

  .navbar { position: absolute; left: 50%; bottom: 4px; margin-left: -124px; width: 237px; height: 24px; box-sizing: border-box; padding-left: 2px; display: flex; align-items: center; background: #f1f1f1; }
  .navbar button { width: 26px; gap: 3px; justify-content: flex-start; }
  .navbar .menu { width: 32px; }
  .status { position: absolute; right: 15px; bottom: 9px; font-weight: 700; line-height: 14px; color: #222; }

  .timeline { display: flex; align-items: flex-start; height: 41px; flex: none; box-sizing: border-box; border-top: 2px solid #ccc; background: #f1f1f1; padding-top: 16px; overflow: hidden; }
  .play { display: flex; gap: 10px; }
  .feature { position: relative; flex: 1; margin-left: 20px; margin-top: -2px; }
  .marker { position: absolute; left: 15px; top: -5px; }
  .tick { position: absolute; left: 9px; top: 20px; width: 2px; height: 8px; background: #ccc; }
  .settings { margin-right: 12px; }
</style>
